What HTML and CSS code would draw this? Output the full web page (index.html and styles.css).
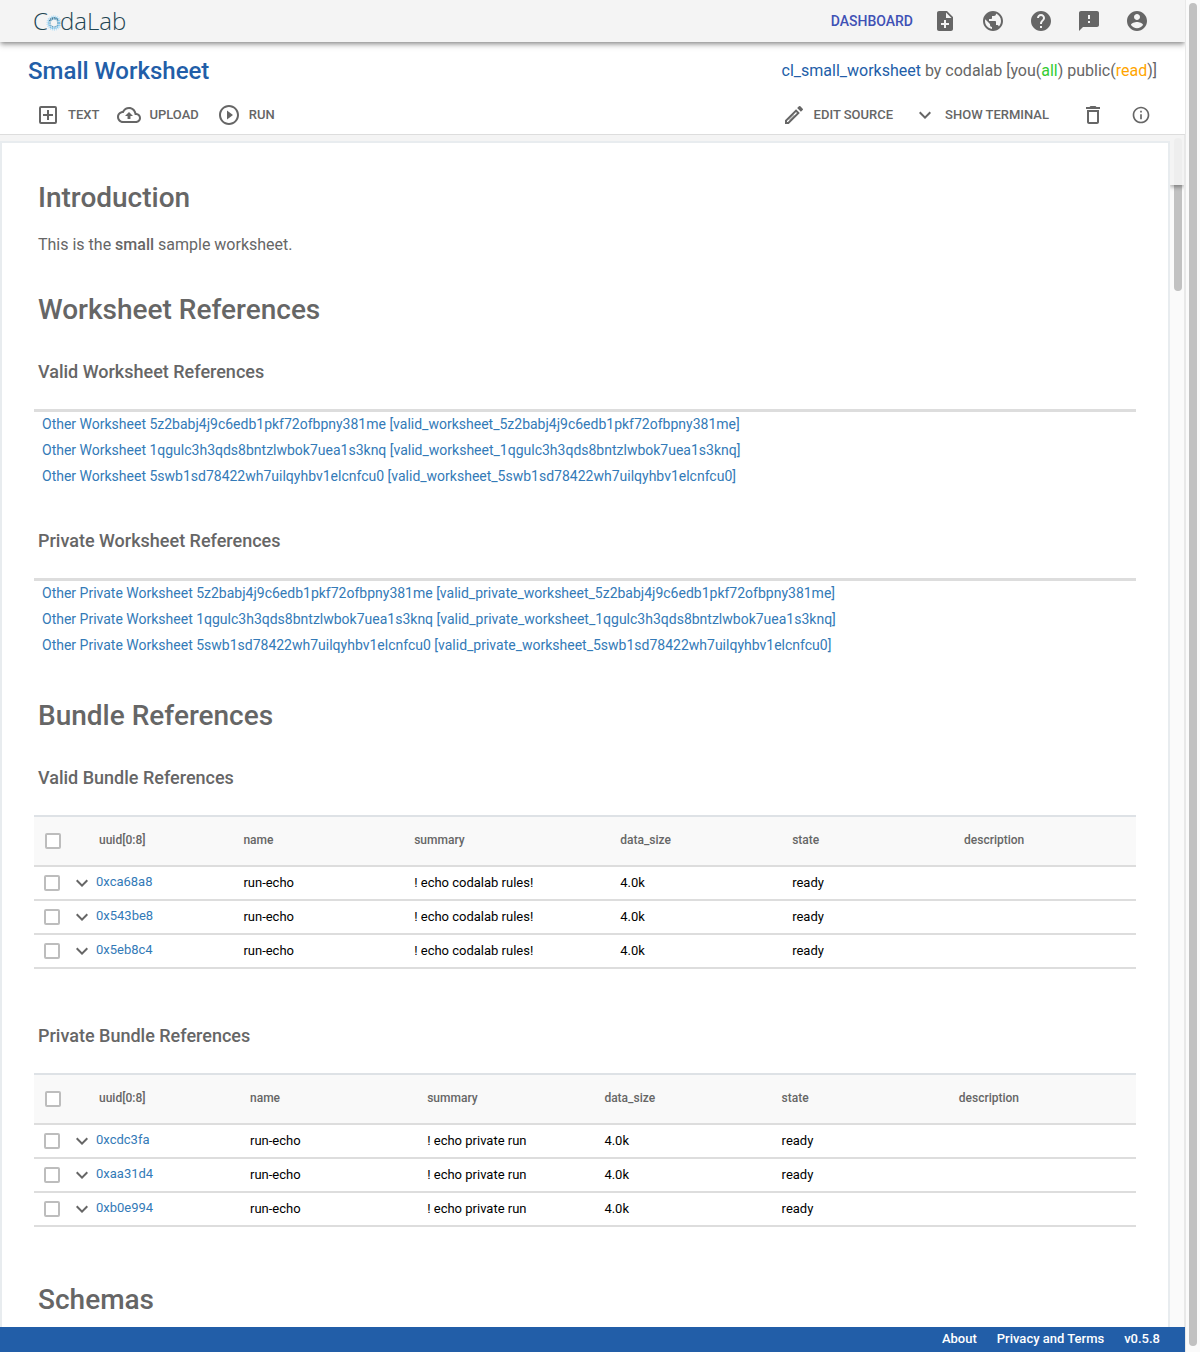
FILE: index.html
```html
<!DOCTYPE html>
<html lang="en">
<head>
<meta charset="utf-8">
<title>Small Worksheet - CodaLab</title>
<meta name="viewport" content="width=device-width, initial-scale=1">
<link rel="stylesheet" href="styles.css">
</head>
<body>
<svg class="sprite" aria-hidden="true">
  <symbol id="expand" viewBox="0 0 24 24"><path d="M16.59 8.59L12 13.17 7.41 8.59 6 10l6 6 6-6z"/></symbol>
</svg>
<div class="app">
  <header class="navbar">
    <a class="logo" href="#" aria-label="CodaLab"><span>C</span><svg class="logo-ring" viewBox="0 0 16 16" aria-hidden="true">
      <circle cx="8" cy="8" r="7" stroke="#b9e0f7" stroke-width="1.400" stroke-dasharray="1 1"/>
      <circle cx="8" cy="8" r="5.500" stroke="#74bfea" stroke-width="1.600" stroke-dasharray="1.300 .6"/>
      <circle cx="8" cy="8" r="4" stroke="#5d9fc4" stroke-width="1.300" stroke-dasharray="1.200 .6"/>
      <path d="M3.500 6A5 5 0 0 1 12 4.700" stroke="#3d6f86" stroke-width="1.200" stroke-dasharray="1.200 .6"/>
    </svg><span>daLab</span></a>
    <nav class="nav-actions">
      <a class="dashboard" href="#">DASHBOARD</a>
      <button class="icon-btn" aria-label="New worksheet"><svg class="icon" viewBox="0 0 24 24"><path d="M14 2H6c-1.100 0-1.990.9-1.990 2L4 20c0 1.100.89 2 1.990 2H18c1.100 0 2-.9 2-2V8l-6-6zm2 14h-3v3h-2v-3H8v-2h3v-3h2v3h3v2zm-3-7V3.500L18.500 9H13z"/></svg></button>
      <button class="icon-btn" aria-label="Gallery"><svg class="icon" viewBox="0 0 24 24"><path d="M12 2C6.480 2 2 6.480 2 12s4.480 10 10 10 10-4.480 10-10S17.520 2 12 2zm-1 17.930c-3.950-.49-7-3.850-7-7.930 0-.62.080-1.210.21-1.790L9 15v1c0 1.100.9 2 2 2v1.930zm6.900-2.540c-.26-.81-1-1.390-1.900-1.390h-1v-3c0-.55-.45-1-1-1H8v-2h2c.55 0 1-.45 1-1V7h2c1.100 0 2-.9 2-2v-.41c2.930 1.190 5 4.060 5 7.410 0 2.080-.8 3.970-2.100 5.390z"/></svg></button>
      <button class="icon-btn" aria-label="Help"><svg class="icon" viewBox="0 0 24 24"><path d="M12 2C6.480 2 2 6.480 2 12s4.480 10 10 10 10-4.480 10-10S17.520 2 12 2zm1 17h-2v-2h2v2zm2.070-7.750l-.9.920C13.450 12.900 13 13.500 13 15h-2v-.5c0-1.100.45-2.100 1.170-2.830l1.240-1.260c.37-.36.59-.86.59-1.410 0-1.100-.9-2-2-2s-2 .9-2 2H8c0-2.210 1.790-4 4-4s4 1.790 4 4c0 .88-.36 1.680-.93 2.250z"/></svg></button>
      <button class="icon-btn" aria-label="Feedback"><svg class="icon" viewBox="0 0 24 24"><path d="M20 2H4c-1.100 0-1.990.9-1.990 2L2 22l4-4h14c1.100 0 2-.9 2-2V4c0-1.100-.9-2-2-2zm-7 12h-2v-2h2v2zm0-4h-2V6h2v4z"/></svg></button>
      <button class="icon-btn" aria-label="Account"><svg class="icon" viewBox="0 0 24 24"><path d="M12 2C6.480 2 2 6.480 2 12s4.480 10 10 10 10-4.480 10-10S17.520 2 12 2zm0 3c1.660 0 3 1.340 3 3s-1.340 3-3 3-3-1.340-3-3 1.340-3 3-3zm0 14.200c-2.500 0-4.710-1.280-6-3.220.030-1.990 4-3.080 6-3.080 1.990 0 5.970 1.090 6 3.080-1.290 1.940-3.500 3.220-6 3.220z"/></svg></button>
    </nav>
  </header>

  <section class="worksheet-head">
    <div class="title-row">
      <h1 class="title">Small Worksheet</h1>
      <div class="permissions"><a href="#">cl_small_worksheet</a> by codalab [you(<span class="perm-all">all</span>) public(<span class="perm-read">read</span>)]</div>
    </div>
    <div class="toolbar">
      <div class="tool-group">
        <button class="tool"><svg class="icon" viewBox="0 0 24 24"><path d="M19 3H5a2 2 0 0 0-2 2v14a2 2 0 0 0 2 2h14a2 2 0 0 0 2-2V5a2 2 0 0 0-2-2zm0 16H5V5h14v14zM11 17h2v-4h4v-2h-4V7h-2v4H7v2h4z"/></svg>TEXT</button>
        <button class="tool"><svg class="icon" viewBox="0 0 24 24"><path d="M19.350 10.040C18.670 6.590 15.640 4 12 4 9.110 4 6.600 5.640 5.350 8.040 2.340 8.360 0 10.910 0 14c0 3.310 2.690 6 6 6h13c2.760 0 5-2.240 5-5 0-2.640-2.050-4.780-4.650-4.960zM19 18H6c-2.210 0-4-1.790-4-4 0-2.050 1.530-3.760 3.560-3.970l1.070-.11.5-.95C8.080 7.140 9.940 6 12 6c2.620 0 4.880 1.860 5.390 4.430l.3 1.500 1.530.11c1.560.1 2.780 1.410 2.780 2.960 0 1.650-1.350 3-3 3zM8 13h2.550v3h2.900v-3H16l-4-4z"/></svg>UPLOAD</button>
        <button class="tool"><svg class="icon" viewBox="0 0 24 24"><path d="M10 16.500l6-4.500-6-4.500v9zM12 2C6.480 2 2 6.480 2 12s4.480 10 10 10 10-4.480 10-10S17.520 2 12 2zm0 18c-4.410 0-8-3.590-8-8s3.590-8 8-8 8 3.590 8 8-3.590 8-8 8z"/></svg>RUN</button>
      </div>
      <div class="tool-group tool-group-end">
        <button class="tool"><svg class="icon" viewBox="0 0 24 24"><path d="M3 17.250V21h3.750L17.810 9.940l-3.750-3.750L3 17.250zM5.920 19H5v-.92l9.060-9.060.92.920L5.920 19zM20.710 5.630l-2.340-2.340a1 1 0 0 0-1.410 0l-1.830 1.830 3.750 3.750 1.830-1.830a1 1 0 0 0 0-1.410z"/><path d="M11 11l2 2-5 5-2-2z" opacity=".35"/></svg>EDIT SOURCE</button>
        <button class="tool"><svg class="icon"><use href="#expand"/></svg>SHOW TERMINAL</button>
        <div class="tool-icons">
          <button class="icon-btn" aria-label="Delete worksheet"><svg class="icon" viewBox="0 0 24 24"><path d="M6 19c0 1.100.9 2 2 2h8c1.100 0 2-.9 2-2V7H6v12zM8 9h8v10H8V9zm7.500-5l-1-1h-5l-1 1H5v2h14V4z"/></svg></button>
          <button class="icon-btn" aria-label="Worksheet information"><svg class="icon icon-small" viewBox="0 0 24 24"><path d="M11 7h2v2h-2zm0 4h2v6h-2zm1-9C6.480 2 2 6.480 2 12s4.480 10 10 10 10-4.480 10-10S17.520 2 12 2zm0 18c-4.410 0-8-3.590-8-8s3.590-8 8-8 8 3.590 8 8-3.590 8-8 8z"/></svg></button>
        </div>
      </div>
    </div>
  </section>

  <div class="workspace">
    <main class="sheet">
      <h2>Introduction</h2>
      <p>This is the <strong>small</strong> sample worksheet.</p>

      <h2>Worksheet References</h2>
      <h3>Valid Worksheet References</h3>
      <ul class="ref-list">
        <li><a href="#">Other Worksheet 5z2babj4j9c6edb1pkf72ofbpny381me [valid_worksheet_5z2babj4j9c6edb1pkf72ofbpny381me]</a></li>
        <li><a href="#">Other Worksheet 1qgulc3h3qds8bntzlwbok7uea1s3knq [valid_worksheet_1qgulc3h3qds8bntzlwbok7uea1s3knq]</a></li>
        <li><a href="#">Other Worksheet 5swb1sd78422wh7uilqyhbv1elcnfcu0 [valid_worksheet_5swb1sd78422wh7uilqyhbv1elcnfcu0]</a></li>
      </ul>
      <h3>Private Worksheet References</h3>
      <ul class="ref-list">
        <li><a href="#">Other Private Worksheet 5z2babj4j9c6edb1pkf72ofbpny381me [valid_private_worksheet_5z2babj4j9c6edb1pkf72ofbpny381me]</a></li>
        <li><a href="#">Other Private Worksheet 1qgulc3h3qds8bntzlwbok7uea1s3knq [valid_private_worksheet_1qgulc3h3qds8bntzlwbok7uea1s3knq]</a></li>
        <li><a href="#">Other Private Worksheet 5swb1sd78422wh7uilqyhbv1elcnfcu0 [valid_private_worksheet_5swb1sd78422wh7uilqyhbv1elcnfcu0]</a></li>
      </ul>

      <h2>Bundle References</h2>
      <h3>Valid Bundle References</h3>
      <div class="bundle-block">
        <table class="bundles">
          <colgroup><col class="c-uuid"><col class="c-name"><col class="c-summary"><col><col><col></colgroup>
          <thead>
            <tr><th><div class="uuid-cell"><input type="checkbox" aria-label="Select all valid bundles"><span>uuid[0:8]</span></div></th><th>name</th><th>summary</th><th>data_size</th><th>state</th><th>description</th></tr>
          </thead>
          <tbody>
            <tr><td><div class="uuid-cell"><input type="checkbox" aria-label="Select 0xca68a8"><button class="expand" aria-label="Expand 0xca68a8"><svg class="icon"><use href="#expand"/></svg></button><a href="#">0xca68a8</a></div></td><td>run-echo</td><td>! echo codalab rules!</td><td>4.0k</td><td>ready</td><td></td></tr>
            <tr><td><div class="uuid-cell"><input type="checkbox" aria-label="Select 0x543be8"><button class="expand" aria-label="Expand 0x543be8"><svg class="icon"><use href="#expand"/></svg></button><a href="#">0x543be8</a></div></td><td>run-echo</td><td>! echo codalab rules!</td><td>4.0k</td><td>ready</td><td></td></tr>
            <tr><td><div class="uuid-cell"><input type="checkbox" aria-label="Select 0x5eb8c4"><button class="expand" aria-label="Expand 0x5eb8c4"><svg class="icon"><use href="#expand"/></svg></button><a href="#">0x5eb8c4</a></div></td><td>run-echo</td><td>! echo codalab rules!</td><td>4.0k</td><td>ready</td><td></td></tr>
          </tbody>
        </table>
      </div>
      <h3>Private Bundle References</h3>
      <div class="bundle-block">
        <table class="bundles">
          <colgroup><col class="c-uuid-wide"><col><col><col><col><col></colgroup>
          <thead>
            <tr><th><div class="uuid-cell"><input type="checkbox" aria-label="Select all private bundles"><span>uuid[0:8]</span></div></th><th>name</th><th>summary</th><th>data_size</th><th>state</th><th>description</th></tr>
          </thead>
          <tbody>
            <tr><td><div class="uuid-cell"><input type="checkbox" aria-label="Select 0xcdc3fa"><button class="expand" aria-label="Expand 0xcdc3fa"><svg class="icon"><use href="#expand"/></svg></button><a href="#">0xcdc3fa</a></div></td><td>run-echo</td><td>! echo private run</td><td>4.0k</td><td>ready</td><td></td></tr>
            <tr><td><div class="uuid-cell"><input type="checkbox" aria-label="Select 0xaa31d4"><button class="expand" aria-label="Expand 0xaa31d4"><svg class="icon"><use href="#expand"/></svg></button><a href="#">0xaa31d4</a></div></td><td>run-echo</td><td>! echo private run</td><td>4.0k</td><td>ready</td><td></td></tr>
            <tr><td><div class="uuid-cell"><input type="checkbox" aria-label="Select 0xb0e994"><button class="expand" aria-label="Expand 0xb0e994"><svg class="icon"><use href="#expand"/></svg></button><a href="#">0xb0e994</a></div></td><td>run-echo</td><td>! echo private run</td><td>4.0k</td><td>ready</td><td></td></tr>
          </tbody>
        </table>
      </div>

      <h2>Schemas</h2>
    </main>
    <div class="pane-scroll" aria-hidden="true">
      <div class="pane-cover"></div>
      <div class="pane-thumb"></div>
    </div>
  </div>

  <footer class="footer">
    <a href="#">About</a>
    <a href="#">Privacy and Terms</a>
    <span>v0.5.8</span>
  </footer>
</div>
<div class="page-scroll" aria-hidden="true"><div class="page-thumb"></div></div>
</body>
</html>
```

FILE: styles.css
```css
* {
  box-sizing: border-box;
}

body {
  margin: 0;
  display: flex;
  min-height: 100vh;
  background: #fff;
  color: #666;
  font-family: Roboto, "Liberation Sans", sans-serif;
  font-size: 14px;
}

a {
  color: #337ab7;
  text-decoration: none;
}

button {
  padding: 0;
  border: 0;
  background: none;
  color: inherit;
  font: inherit;
  cursor: pointer;
}

.sprite {
  display: none;
}

.icon {
  display: block;
  flex: none;
  width: 24px;
  height: 24px;
  fill: currentColor;
}

.icon-small {
  width: 20px;
  height: 20px;
}

.icon-btn {
  display: flex;
  align-items: center;
  justify-content: center;
  width: 48px;
}

.app {
  display: flex;
  flex: 1;
  flex-direction: column;
  min-width: 0;
}

/* Top bar */
.navbar {
  z-index: 1;
  display: flex;
  align-items: center;
  justify-content: space-between;
  height: 42px;
  padding: 0 24px 0 33px;
  background: #f4f4f4;
  box-shadow: 0 2px 4px -1px rgba(0, 0, 0, .3), 0 3px 6px rgba(0, 0, 0, .25);
  clip-path: inset(0 0 -12px 0);
}

.logo {
  display: flex;
  align-items: center;
  color: #1f4552;
  font-family: "Open Sans", "Noto Sans", sans-serif;
  font-size: 24px;
  font-weight: 300;
  line-height: 32px;
}

.logo-ring {
  width: 16px;
  height: 16px;
  margin: 4px -2px 0 -2px;
  fill: none;
}

.nav-actions {
  display: flex;
  align-items: center;
  color: #666;
}

.dashboard {
  margin-right: 8px;
  color: #3f51b5;
  font-weight: 500;
}

/* Worksheet title and tools */
.worksheet-head {
  padding-bottom: 4px;
  border-bottom: 1px solid #ddd;
  background: #fff;
}

.title-row {
  display: flex;
  align-items: center;
  justify-content: space-between;
  height: 57px;
  padding: 0 28px;
}

.title {
  margin: 0;
  color: #225ea8;
  font-size: 24px;
  font-weight: 500;
}

.permissions {
  font-size: 16px;
}

.permissions a {
  color: #225ea8;
}

.perm-all {
  color: #3c3;
}

.perm-read {
  color: #ffa500;
}

.toolbar {
  display: flex;
  justify-content: space-between;
  height: 31px;
  padding: 0 20px 0 36px;
}

.tool-group {
  display: flex;
  align-items: center;
  gap: 18px;
}

.tool-group-end {
  gap: 20px;
}

.tool {
  display: flex;
  align-items: center;
  gap: 8px;
  font-size: 13px;
  font-weight: 500;
}

.tool-icons {
  display: flex;
}

/* Worksheet content */
.workspace {
  display: flex;
  flex: 1;
  background: #fafafa;
}

.sheet {
  flex: 1;
  margin-top: 6px;
  padding: 35px 32px 7px;
  border: 2px solid #e8ecef;
  border-bottom: 0;
  background: #fff;
  box-shadow: 0 -6px #f4f4f4;
}

.sheet h2,
.sheet h3,
.sheet p {
  padding: 0 4px;
}

.sheet h2 {
  margin: 37px 0 19px;
  font-size: 28px;
  font-weight: 500;
  line-height: 40px;
}

.sheet h2:first-child {
  margin-top: 0;
}

.sheet h2:last-child {
  margin-bottom: 0;
}

.sheet h3 {
  margin: 39px 0 25px;
  font-size: 18px;
  font-weight: 500;
  line-height: 24px;
}

.sheet h2 + h3 {
  margin-top: 30px;
}

.sheet p {
  margin: 0;
  font-size: 16px;
  line-height: 16px;
}

.sheet strong {
  font-weight: 500;
}

.ref-list {
  margin: 0;
  padding: 0;
  border-top: 3px solid #ddd;
  list-style: none;
}

.ref-list li {
  padding: 0 8px 2px;
  line-height: 24px;
}

.bundle-block {
  padding-bottom: 16px;
}

.bundles {
  width: 100%;
  border-spacing: 0;
  table-layout: fixed;
  color: #000;
  font-size: 13px;
}

.c-uuid { width: 19%; }
.c-name { width: 15.5%; }
.c-summary { width: 18.7%; }
.c-uuid-wide { width: 19.6%; }

.bundles th,
.bundles td {
  padding: 0 0 2px;
  border-bottom: 2px solid #ddd;
  text-align: left;
}

.bundles th {
  height: 52px;
  border-top: 2px solid #dee2e6;
  background: #f9f9f9;
  color: #666;
  font-size: 12px;
  font-weight: 500;
}

.bundles td {
  height: 34px;
}

.bundles th:first-child,
.bundles td:first-child {
  padding: 0;
}

.uuid-cell {
  display: flex;
  align-items: center;
}

.uuid-cell input {
  appearance: none;
  flex: none;
  width: 16px;
  height: 16px;
  margin: 0 10px;
  border: 2px solid #bdbdbd;
  border-radius: 2px;
  background: #fff;
}

.uuid-cell span {
  padding-bottom: 2px;
}

.uuid-cell a {
  padding-bottom: 4px;
}

th .uuid-cell input {
  margin: 0 38px 0 11px;
}

.expand {
  margin-right: 2px;
  color: #666;
}

/* Scroll tracks */
.pane-scroll {
  width: 15px;
  border-right: 1px solid #e8e8e8;
}

.pane-cover {
  height: 50px;
  padding: 3px 2px 0 4px;
  background: #f4f4f4;
  box-shadow: 0 2px 4px rgba(0, 0, 0, .35);
  clip-path: inset(0 0 -8px 0);
}

.pane-cover::before {
  display: block;
  height: 47px;
  border-radius: 4px 4px 0 0;
  background: #eee;
  content: "";
}

.pane-thumb {
  width: 8px;
  height: 106px;
  margin-left: 4px;
  border-radius: 0 0 4px 4px;
  background: #c1c1c1;
}

.page-scroll {
  display: flex;
  width: 15px;
  padding: 3px 3px 6px;
  border-left: 1px solid #e8e8e8;
  background: #fafafa;
}

.page-thumb {
  width: 8px;
  border-radius: 4px;
  background: #c1c1c1;
}

/* Footer */
.footer {
  display: flex;
  align-items: center;
  justify-content: flex-end;
  gap: 20px;
  height: 25px;
  padding: 0 25px 2px;
  background: #225ea8;
  color: #fff;
  font-size: 13px;
  font-weight: 500;
}

.footer a {
  color: #fff;
}
```
